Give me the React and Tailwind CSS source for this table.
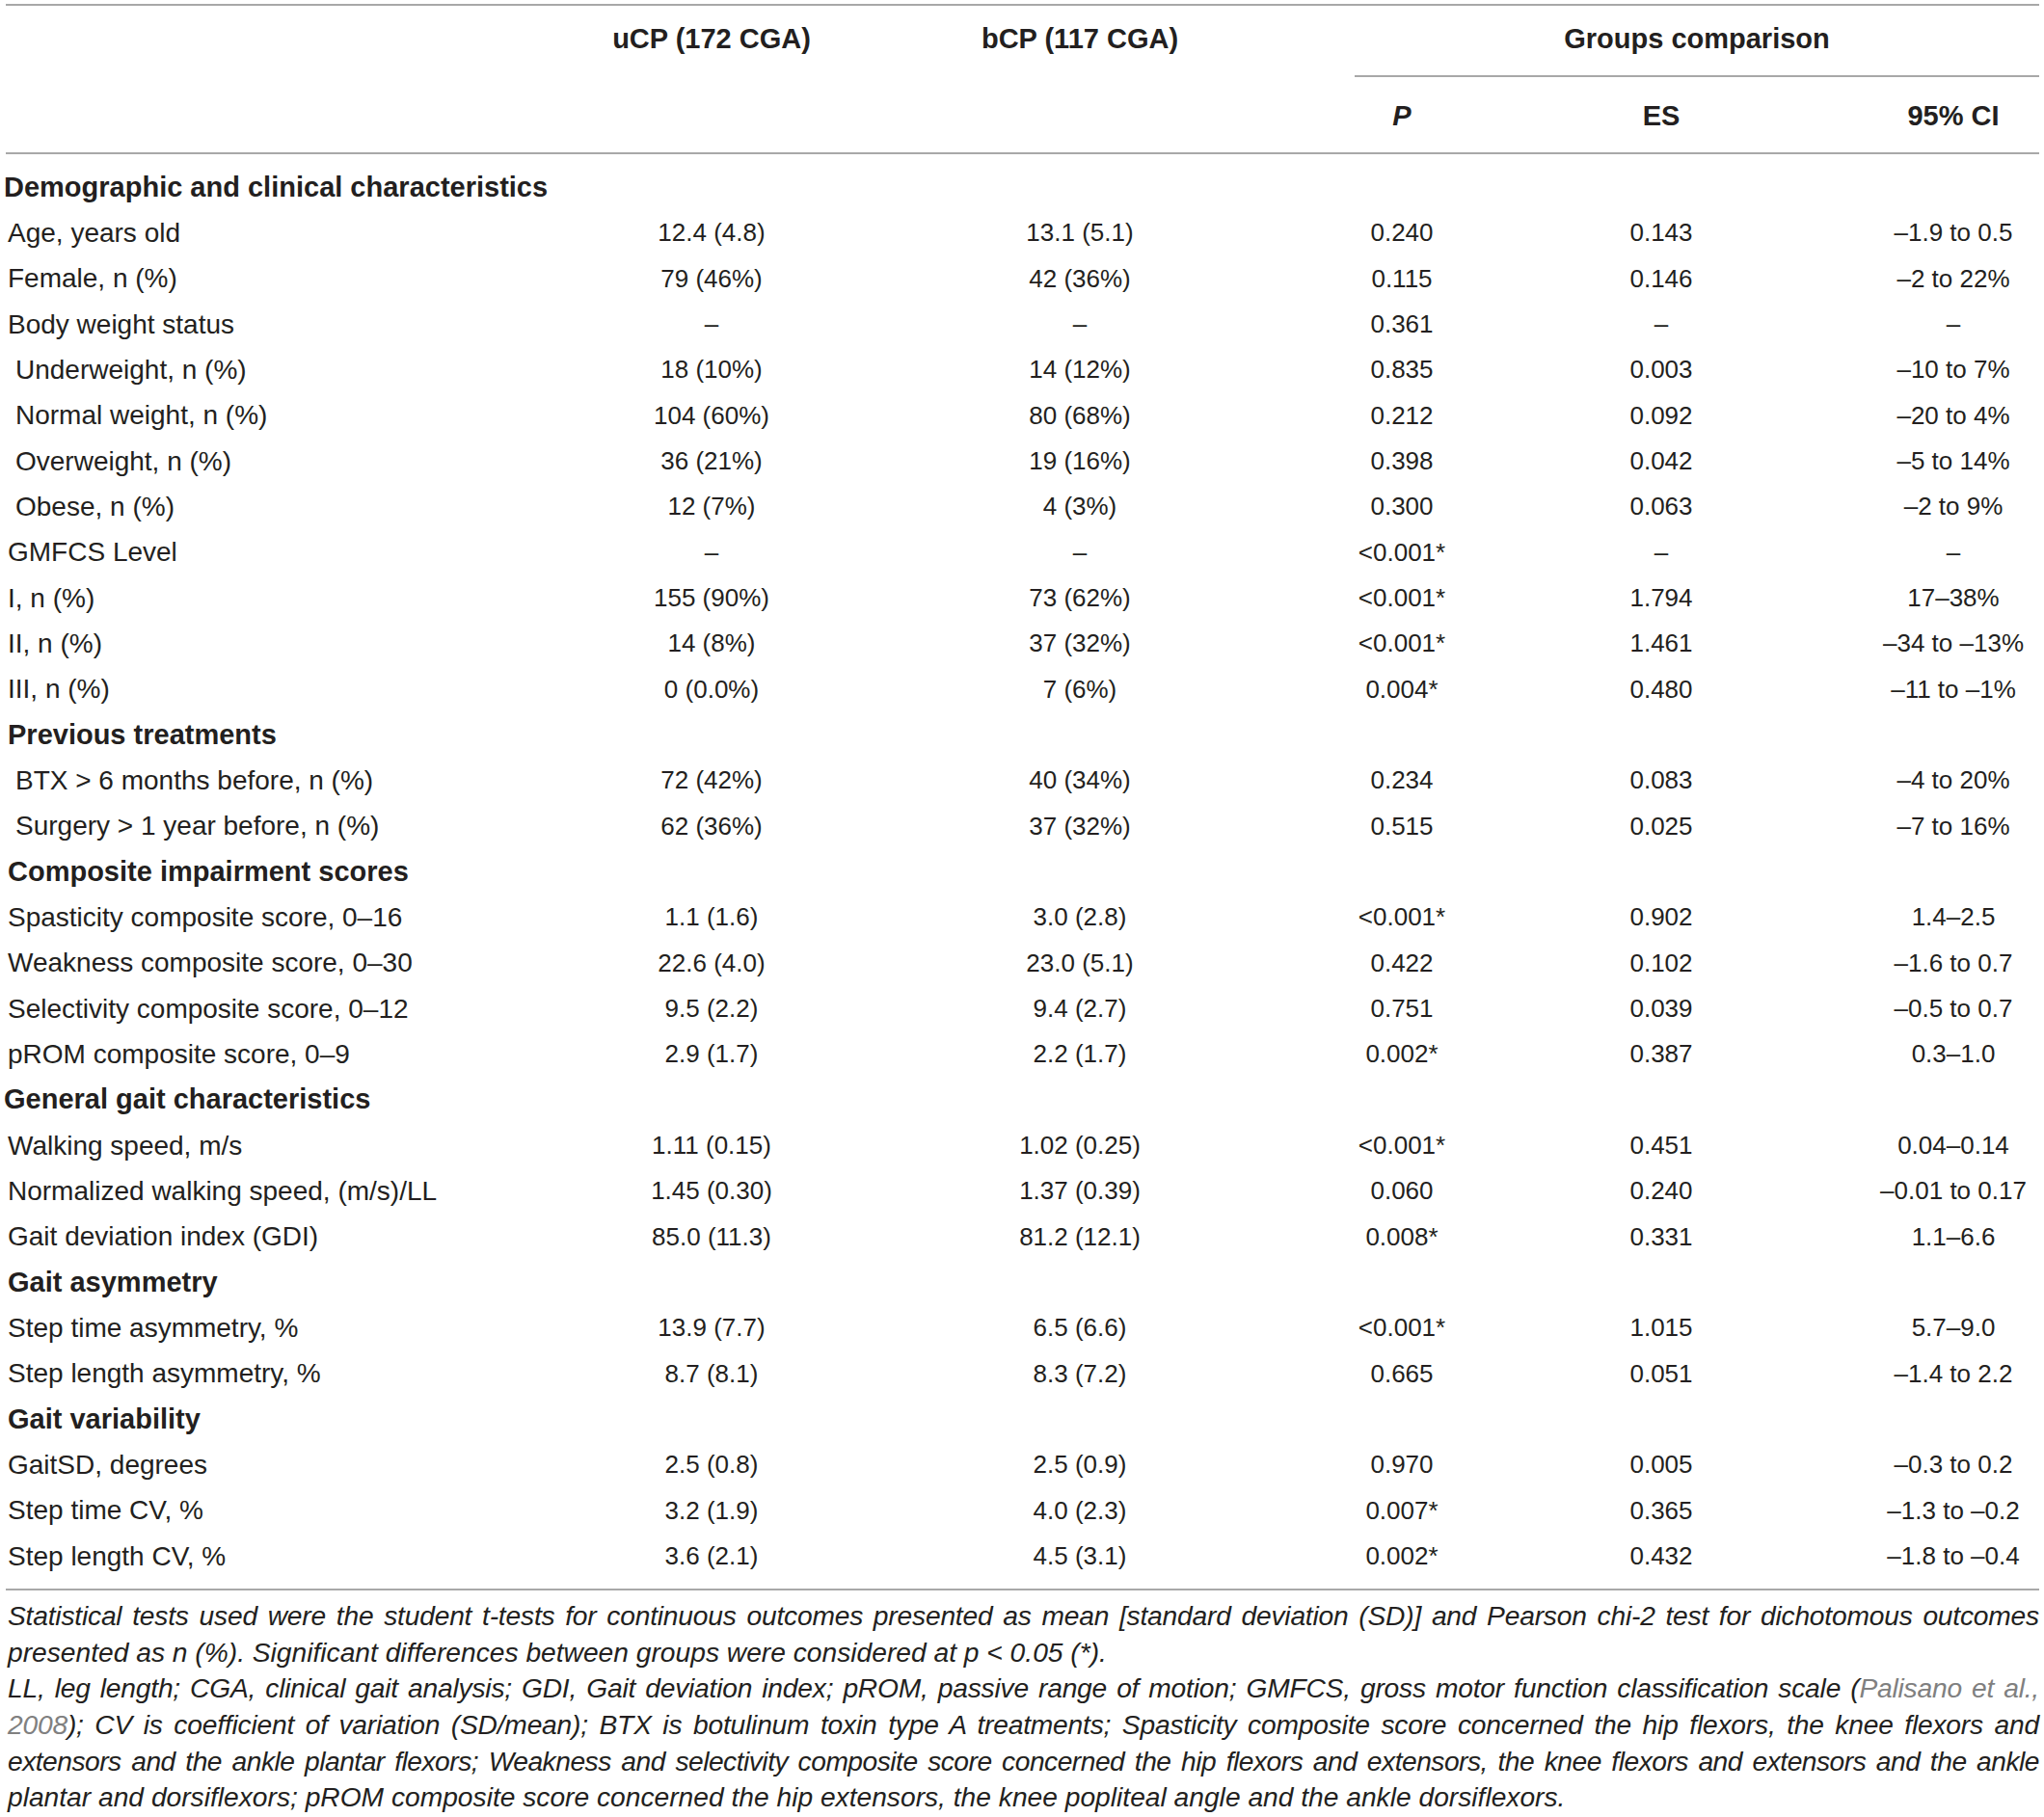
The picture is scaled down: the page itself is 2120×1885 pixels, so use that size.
const rows = [
  { h: "Demographic and clinical characteristics", flush: true },
  { c: ["Age, years old", "12.4 (4.8)", "13.1 (5.1)", "0.240", "0.143", "–1.9 to 0.5"] },
  { c: ["Female, n (%)", "79 (46%)", "42 (36%)", "0.115", "0.146", "–2 to 22%"] },
  { c: ["Body weight status", "–", "–", "0.361", "–", "–"] },
  { sub: true, c: ["Underweight, n (%)", "18 (10%)", "14 (12%)", "0.835", "0.003", "–10 to 7%"] },
  { sub: true, c: ["Normal weight, n (%)", "104 (60%)", "80 (68%)", "0.212", "0.092", "–20 to 4%"] },
  { sub: true, c: ["Overweight, n (%)", "36 (21%)", "19 (16%)", "0.398", "0.042", "–5 to 14%"] },
  { sub: true, c: ["Obese, n (%)", "12 (7%)", "4 (3%)", "0.300", "0.063", "–2 to 9%"] },
  { c: ["GMFCS Level", "–", "–", "<0.001*", "–", "–"] },
  { c: ["I, n (%)", "155 (90%)", "73 (62%)", "<0.001*", "1.794", "17–38%"] },
  { c: ["II, n (%)", "14 (8%)", "37 (32%)", "<0.001*", "1.461", "–34 to –13%"] },
  { c: ["III, n (%)", "0 (0.0%)", "7 (6%)", "0.004*", "0.480", "–11 to –1%"] },
  { h: "Previous treatments" },
  { sub: true, c: ["BTX > 6 months before, n (%)", "72 (42%)", "40 (34%)", "0.234", "0.083", "–4 to 20%"] },
  { sub: true, c: ["Surgery > 1 year before, n (%)", "62 (36%)", "37 (32%)", "0.515", "0.025", "–7 to 16%"] },
  { h: "Composite impairment scores" },
  { c: ["Spasticity composite score, 0–16", "1.1 (1.6)", "3.0 (2.8)", "<0.001*", "0.902", "1.4–2.5"] },
  { c: ["Weakness composite score, 0–30", "22.6 (4.0)", "23.0 (5.1)", "0.422", "0.102", "–1.6 to 0.7"] },
  { c: ["Selectivity composite score, 0–12", "9.5 (2.2)", "9.4 (2.7)", "0.751", "0.039", "–0.5 to 0.7"] },
  { c: ["pROM composite score, 0–9", "2.9 (1.7)", "2.2 (1.7)", "0.002*", "0.387", "0.3–1.0"] },
  { h: "General gait characteristics", flush: true },
  { c: ["Walking speed, m/s", "1.11 (0.15)", "1.02 (0.25)", "<0.001*", "0.451", "0.04–0.14"] },
  { c: ["Normalized walking speed, (m/s)/LL", "1.45 (0.30)", "1.37 (0.39)", "0.060", "0.240", "–0.01 to 0.17"] },
  { c: ["Gait deviation index (GDI)", "85.0 (11.3)", "81.2 (12.1)", "0.008*", "0.331", "1.1–6.6"] },
  { h: "Gait asymmetry" },
  { c: ["Step time asymmetry, %", "13.9 (7.7)", "6.5 (6.6)", "<0.001*", "1.015", "5.7–9.0"] },
  { c: ["Step length asymmetry, %", "8.7 (8.1)", "8.3 (7.2)", "0.665", "0.051", "–1.4 to 2.2"] },
  { h: "Gait variability" },
  { c: ["GaitSD, degrees", "2.5 (0.8)", "2.5 (0.9)", "0.970", "0.005", "–0.3 to 0.2"] },
  { c: ["Step time CV, %", "3.2 (1.9)", "4.0 (2.3)", "0.007*", "0.365", "–1.3 to –0.2"] },
  { c: ["Step length CV, %", "3.6 (2.1)", "4.5 (3.1)", "0.002*", "0.432", "–1.8 to –0.4"] },
]

const grid = "grid grid-cols-[541px_382px_382px_286px_252px_266px]"

function Row({ row }) {
  if (row.h) {
    return (
      <div className={`${grid} h-[47.33px] items-center`}>
        <div className={`col-span-6 font-bold text-[29px] whitespace-nowrap ${row.flush ? "-ml-[2px]" : "pl-[2px]"}`}>
          {row.h}
        </div>
      </div>
    )
  }
  const [label, ...vals] = row.c
  return (
    <div className={`${grid} h-[47.33px] items-center`}>
      <div className={`${row.sub ? "pl-[10px]" : "pl-[2px]"} text-[28px] whitespace-nowrap`}>{label}</div>
      {vals.map((v, i) => (
        <div key={i} className={`text-center text-[26px] whitespace-nowrap ${i === 4 ? "pl-[88px]" : ""}`}>
          {v}
        </div>
      ))}
    </div>
  )
}

const line = "text-justify [text-align-last:justify]"

export default function App() {
  return (
    <div className="bg-white w-[2120px] h-[1885px] pt-[4px] px-[6px] text-[#231f20] font-['Liberation_Sans',Arial,sans-serif]">
      <div className="w-[2109px] border-t-2 border-[#a8a8a8]">
        {/* header */}
        <div className={`${grid} h-[74px] items-center font-bold text-[29px]`}>
          <div />
          <div className="text-center pb-[5px]">uCP (172 CGA)</div>
          <div className="text-center pb-[5px]">bCP (117 CGA)</div>
          <div className="col-span-3 h-full pl-[94px]">
            <div className="h-full pb-[3px] border-b-2 border-[#a8a8a8] flex items-center justify-center">
              Groups comparison
            </div>
          </div>
        </div>
        <div className={`${grid} h-[80px] pt-[4px] items-center font-bold text-[29px] border-b-2 border-[#a8a8a8]`}>
          <div />
          <div />
          <div />
          <div className="text-center italic">P</div>
          <div className="text-center">ES</div>
          <div className="text-center pl-[88px]">95% CI</div>
        </div>

        {/* body */}
        <div className="pt-[11px] pb-[10px] border-b-2 border-[#a8a8a8]">
          {rows.map((r, i) => (
            <Row key={i} row={r} />
          ))}
        </div>

        {/* footnote */}
        <div className="pt-[8px] pl-[2px] italic text-[28.2px] leading-[37.6px]">
          <div className={`${line} tracking-[-0.2px]`}>
            Statistical tests used were the student t-tests for continuous outcomes presented as mean [standard deviation (SD)] and Pearson chi-2 test for dichotomous outcomes
          </div>
          <div>
            presented as n (%). Significant differences between groups were considered at p &lt; 0.05 (*).
          </div>
          <div className={`${line} tracking-[-0.2px]`}>
            LL, leg length; CGA, clinical gait analysis; GDI, Gait deviation index; pROM, passive range of motion; GMFCS, gross motor function classification scale (
            <span className="text-[#808080]">Palisano et al.,</span>
          </div>
          <div className={`${line} tracking-[-0.2px]`}>
            <span className="text-[#808080]">2008</span>); CV is coefficient of variation (SD/mean); BTX is botulinum toxin type A treatments; Spasticity composite score concerned the hip flexors, the knee flexors and
          </div>
          <div className={`${line} tracking-[-0.5px]`}>
            extensors and the ankle plantar flexors; Weakness and selectivity composite score concerned the hip flexors and extensors, the knee flexors and extensors and the ankle
          </div>
          <div>
            plantar and dorsiflexors; pROM composite score concerned the hip extensors, the knee popliteal angle and the ankle dorsiflexors.
          </div>
        </div>
      </div>
    </div>
  )
}
